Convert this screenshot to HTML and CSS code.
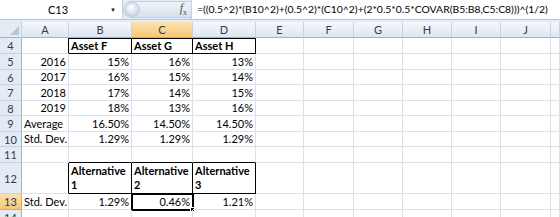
FILE: index.html
```html
<!DOCTYPE html>
<html lang="en">
<head>
    <meta charset="UTF-8">
    <title>Portfolio Std. Dev.</title>
    <link rel="stylesheet" href="styles.css">
</head>
<body>
    <div class="fbar">
        <div class="namebox">
            <span class="ref">C13</span>
            <span class="drop">&#9660;</span>
        </div>
        <div class="fxpill">
            <span class="knob"></span>
            <span class="fx"><i>f</i><sub>x</sub></span>
        </div>
        <div class="formula">=((0.5^2)*(B10^2)+(0.5^2)*(C10^2)+(2*0.5*0.5*COVAR(B5:B8,C5:C8)))^(1/2)</div>
    </div>
    <div class="gap"></div>
    <div class="sheet">
        <!-- column headers -->
        <div class="hd corner"></div>
        <div class="hd">A</div>
        <div class="hd">B</div>
        <div class="hd sel">C</div>
        <div class="hd">D</div>
        <div class="hd">E</div>
        <div class="hd">F</div>
        <div class="hd">G</div>
        <div class="hd">H</div>
        <div class="hd">I</div>
        <div class="hd">J</div>
        <div class="hd"></div>

        <div class="rh">4</div>
        <div class="c br"></div>
        <div class="c box top b">Asset F</div>
        <div class="c box top b">Asset G</div>
        <div class="c box top b">Asset H</div>
        <div class="c"></div><div class="c"></div><div class="c"></div><div class="c"></div><div class="c"></div><div class="c"></div><div class="c"></div>

        <div class="rh">5</div>
        <div class="c n">2016</div>
        <div class="c n">15%</div>
        <div class="c n">16%</div>
        <div class="c n">13%</div>
        <div class="c"></div><div class="c"></div><div class="c"></div><div class="c"></div><div class="c"></div><div class="c"></div><div class="c"></div>

        <div class="rh">6</div>
        <div class="c n">2017</div>
        <div class="c n">16%</div>
        <div class="c n">15%</div>
        <div class="c n">14%</div>
        <div class="c"></div><div class="c"></div><div class="c"></div><div class="c"></div><div class="c"></div><div class="c"></div><div class="c"></div>

        <div class="rh">7</div>
        <div class="c n">2018</div>
        <div class="c n">17%</div>
        <div class="c n">14%</div>
        <div class="c n">15%</div>
        <div class="c"></div><div class="c"></div><div class="c"></div><div class="c"></div><div class="c"></div><div class="c"></div><div class="c"></div>

        <div class="rh">8</div>
        <div class="c n">2019</div>
        <div class="c n">18%</div>
        <div class="c n">13%</div>
        <div class="c n">16%</div>
        <div class="c"></div><div class="c"></div><div class="c"></div><div class="c"></div><div class="c"></div><div class="c"></div><div class="c"></div>

        <div class="rh">9</div>
        <div class="c">Average</div>
        <div class="c n">16.50%</div>
        <div class="c n">14.50%</div>
        <div class="c n">14.50%</div>
        <div class="c"></div><div class="c"></div><div class="c"></div><div class="c"></div><div class="c"></div><div class="c"></div><div class="c"></div>

        <div class="rh">10</div>
        <div class="c">Std. Dev.</div>
        <div class="c n">1.29%</div>
        <div class="c n">1.29%</div>
        <div class="c n">1.29%</div>
        <div class="c"></div><div class="c"></div><div class="c"></div><div class="c"></div><div class="c"></div><div class="c"></div><div class="c"></div>

        <div class="rh">11</div>
        <div class="c"></div>
        <div class="c bb"></div>
        <div class="c bb"></div>
        <div class="c bb"></div>
        <div class="c"></div><div class="c"></div><div class="c"></div><div class="c"></div><div class="c"></div><div class="c"></div><div class="c"></div>

        <div class="rh">12</div>
        <div class="c br"></div>
        <div class="c box b wrap">Alternative 1</div>
        <div class="c box b wrap">Alternative 2</div>
        <div class="c box b wrap">Alternative 3</div>
        <div class="c"></div><div class="c"></div><div class="c"></div><div class="c"></div><div class="c"></div><div class="c"></div><div class="c"></div>

        <div class="rh sel">13</div>
        <div class="c">Std. Dev.</div>
        <div class="c n">1.29%</div>
        <div class="c n active">0.46%</div>
        <div class="c n">1.21%</div>
        <div class="c"></div><div class="c"></div><div class="c"></div><div class="c"></div><div class="c"></div><div class="c"></div><div class="c"></div>

        <div class="rh">14</div>
        <div class="c"></div><div class="c"></div><div class="c"></div><div class="c"></div>
        <div class="c"></div><div class="c"></div><div class="c"></div><div class="c"></div><div class="c"></div><div class="c"></div><div class="c"></div>
    </div>
</body>
</html>
```

FILE: styles.css
```css
body {
    margin: 0;
    font-family: Lato, 'Liberation Sans', sans-serif;
    font-size: 11px;
    color: #000;
    background: #fff;
    overflow: hidden;
}
.fbar {
    display: flex;
    height: 20px;
    background: #e6ecf5;
    border-bottom: 1px solid #b6c6da;
    box-sizing: border-box;
}
.namebox {
    width: 122px;
    display: flex;
    align-items: center;
    background: #fff;
    border-right: 1px solid #c4d0e0;
}
.ref {
    flex: 1;
    text-align: center;
    padding-left: 6px;
}
.drop {
    font-size: 6px;
    width: 12px;
    color: #222;
}
.fxpill {
    width: 68px;
    display: flex;
    align-items: center;
    justify-content: space-between;
    margin: 1px 0;
    padding: 0 4px 0 1px;
    box-sizing: border-box;
    border-radius: 9px 0 0 9px;
    background: linear-gradient(#f1f4f9, #d7e0ec);
    border: 1px solid #c3cfdf;
    border-right: 0;
}
.knob {
    width: 15px;
    height: 15px;
    border-radius: 50%;
    background: radial-gradient(circle at 40% 35%, #fff, #cdd7e5 70%);
    border: 1px solid #bfcadb;
    box-sizing: border-box;
}
.fx {
    font-family: 'Liberation Serif', serif;
    font-size: 12px;
    color: #555;
}
.fx sub {
    font-size: 8px;
}
.formula {
    flex: 1;
    background: #fff;
    padding: 3px 0 0 5px;
    white-space: nowrap;
    overflow: hidden;
    border-left: 1px solid #c4d0e0;
    font-size: 10.4px;
}
.gap {
    height: 2px;
    background: #e6ecf5;
}
.sheet {
    display: grid;
    grid-template-columns: 22px 47px 63px 61px 63px 48px 50px 49px 49px 49px 50px 1fr;
    grid-template-rows: 16px 16px 16px 15px 16px 15px 16px 15px 16px 31px 16px 16px;
}
.hd, .rh {
    background: linear-gradient(#f4f7fb, #dfe6f1);
    color: #2e3d52;
    border-right: 1px solid #c6d2e2;
    border-bottom: 1px solid #9fb3cc;
    box-sizing: border-box;
    display: flex;
    align-items: center;
    justify-content: center;
}
.rh {
    background: #e4ebf5;
    border-right: 1px solid #9fb3cc;
    border-bottom: 1px solid #c6d2e2;
}
.corner {
    background: #e4ebf5;
    position: relative;
}
.corner::after {
    content: '';
    position: absolute;
    right: 2px;
    bottom: 2px;
    border-left: 9px solid transparent;
    border-bottom: 9px solid #b8c6d8;
}
.hd.sel, .rh.sel {
    background: linear-gradient(#fbe2b0, #f5c878);
    border-bottom-color: #f0a54a;
}
.rh.sel {
    border-right-color: #f0a54a;
}
.c {
    border-right: 1px solid #dbe0ea;
    border-bottom: 1px solid #dbe0ea;
    box-sizing: border-box;
    display: flex;
    align-items: flex-end;
    padding: 0 2px 1px;
    line-height: 13px;
    white-space: nowrap;
    position: relative;
}
.n {
    justify-content: flex-end;
}
.b {
    font-weight: bold;
}
.wrap {
    white-space: normal;
    line-height: 14px;
}
.box {
    border-right-color: #000;
    border-bottom-color: #000;
}
.top {
    box-shadow: inset 0 1px 0 #000;
}
.br {
    border-right-color: #000;
}
.bb {
    border-bottom-color: #000;
}
.active {
    outline: 2px solid #000;
    outline-offset: -1px;
}
.active::after {
    content: '';
    position: absolute;
    right: -3px;
    bottom: -3px;
    width: 5px;
    height: 5px;
    background: #000;
    border: 1px solid #fff;
    box-sizing: border-box;
}
```
